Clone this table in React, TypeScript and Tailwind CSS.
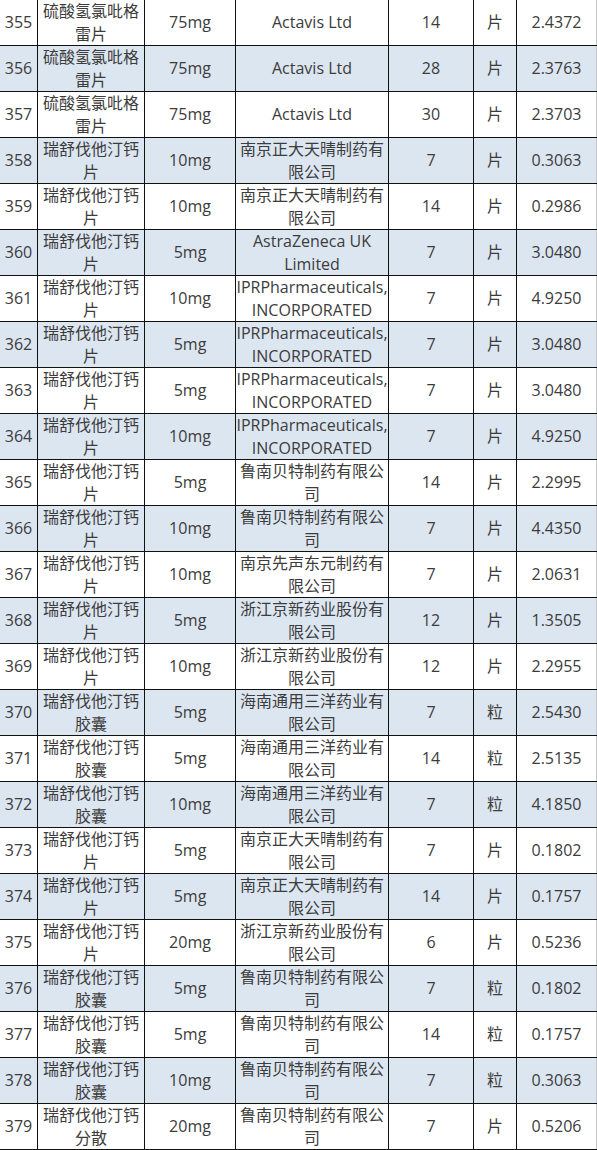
import React from "react";

type Row = [string, string, string, string | string[], string, string, string];

const N1 = "硫酸氢氯吡格雷片";
const RP = "瑞舒伐他汀钙片";
const RC = "瑞舒伐他汀钙胶囊";
const IPR = ["IPRPharmaceuticals,", "INCORPORATED"];
const NJ = "南京正大天晴制药有限公司";
const LN = "鲁南贝特制药有限公司";
const ZJ = "浙江京新药业股份有限公司";
const HN = "海南通用三洋药业有限公司";

const rows: Row[] = [
  ["355", N1, "75mg", "Actavis Ltd", "14", "片", "2.4372"],
  ["356", N1, "75mg", "Actavis Ltd", "28", "片", "2.3763"],
  ["357", N1, "75mg", "Actavis Ltd", "30", "片", "2.3703"],
  ["358", RP, "10mg", NJ, "7", "片", "0.3063"],
  ["359", RP, "10mg", NJ, "14", "片", "0.2986"],
  ["360", RP, "5mg", ["AstraZeneca UK", "Limited"], "7", "片", "3.0480"],
  ["361", RP, "10mg", IPR, "7", "片", "4.9250"],
  ["362", RP, "5mg", IPR, "7", "片", "3.0480"],
  ["363", RP, "5mg", IPR, "7", "片", "3.0480"],
  ["364", RP, "10mg", IPR, "7", "片", "4.9250"],
  ["365", RP, "5mg", LN, "14", "片", "2.2995"],
  ["366", RP, "10mg", LN, "7", "片", "4.4350"],
  ["367", RP, "10mg", "南京先声东元制药有限公司", "7", "片", "2.0631"],
  ["368", RP, "5mg", ZJ, "12", "片", "1.3505"],
  ["369", RP, "10mg", ZJ, "12", "片", "2.2955"],
  ["370", RC, "5mg", HN, "7", "粒", "2.5430"],
  ["371", RC, "5mg", HN, "14", "粒", "2.5135"],
  ["372", RC, "10mg", HN, "7", "粒", "4.1850"],
  ["373", RP, "5mg", NJ, "7", "片", "0.1802"],
  ["374", RP, "5mg", NJ, "14", "片", "0.1757"],
  ["375", RP, "20mg", ZJ, "6", "片", "0.5236"],
  ["376", RC, "5mg", LN, "7", "粒", "0.1802"],
  ["377", RC, "5mg", LN, "14", "粒", "0.1757"],
  ["378", RC, "10mg", LN, "7", "粒", "0.3063"],
  ["379", "瑞舒伐他汀钙分散", "20mg", LN, "7", "片", "0.5206"],
];

const cell =
  "flex items-center justify-center text-center border-r border-[#111] overflow-hidden";

export default function App() {
  return (
    <div
      className="w-[597px] bg-white text-[16px] leading-[22.5px] text-[#3c3c3c]"
      style={{ fontFamily: '"Open Sans", "Noto Sans CJK SC", sans-serif' }}
    >
      {rows.map((r, i) => (
        <div
          key={r[0]}
          className={`grid grid-cols-[38px_107px_91px_153px_85px_43px_80px] h-[46px] border-b border-[#111] ${
            i % 2 === 1 ? "bg-[#dce6f1]" : "bg-white"
          }`}
        >
          <div className={cell}>{r[0]}</div>
          <div className={`${cell} px-[4px]`}>{r[1]}</div>
          <div className={cell}>{r[2]}</div>
          <div className={`${cell} px-[3px] flex-col`}>
            {Array.isArray(r[3]) ? (
              r[3].map((l) => (
                <span key={l} className="whitespace-nowrap">
                  {l}
                </span>
              ))
            ) : (
              <span>{r[3]}</span>
            )}
          </div>
          <div className={cell}>{r[4]}</div>
          <div className={cell}>{r[5]}</div>
          <div className="flex items-center justify-center text-center border-r border-[#c8c8c8]">
            {r[6]}
          </div>
        </div>
      ))}
    </div>
  );
}
